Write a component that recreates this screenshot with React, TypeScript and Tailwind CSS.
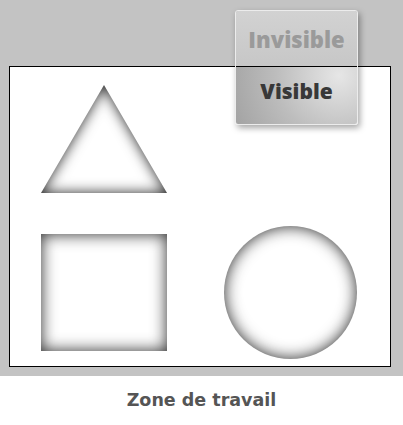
const panelFont = { fontFamily: "'Open Sans', Lato, sans-serif" };

function Triangle() {
  return (
    <svg width="126" height="108" viewBox="0 0 126 108">
      <defs>
        <filter
          id="inner-tri"
          x="-50%"
          y="-50%"
          width="200%"
          height="200%"
          colorInterpolationFilters="sRGB"
        >
          <feComponentTransfer in="SourceAlpha" result="inv">
            <feFuncA type="table" tableValues="1 0" />
          </feComponentTransfer>
          <feGaussianBlur in="inv" stdDeviation="7" result="blur" />
          <feFlood floodColor="#000" floodOpacity="0.85" />
          <feComposite in2="blur" operator="in" result="shadow" />
          <feComposite in="shadow" in2="SourceAlpha" operator="in" result="inner" />
          <feMerge>
            <feMergeNode in="SourceGraphic" />
            <feMergeNode in="inner" />
          </feMerge>
        </filter>
      </defs>
      <polygon points="63,0 126,108 0,108" fill="#fff" filter="url(#inner-tri)" />
    </svg>
  );
}

export default function App() {
  return (
    <div className="relative w-[403px] h-[425px] bg-white overflow-hidden">
      {/* work area */}
      <div className="h-[376px] bg-[#c3c3c3] pt-[66px] pl-[9px]">
        <div className="w-[382px] h-[301px] border border-black bg-white pl-[31px] pt-[18px]">
          <div className="grid grid-cols-[126px_133px] gap-x-[57px] gap-y-[33px] items-center">
            <Triangle />
            <div />
            <div className="w-[126px] h-[117px] bg-white shadow-[inset_0_0_16px_rgba(0,0,0,0.85)]" />
            <div className="w-[133px] h-[133px] rounded-full bg-white shadow-[inset_0_0_16px_rgba(0,0,0,0.85)]" />
          </div>
        </div>
      </div>

      <div className="h-[49px] flex items-center justify-center">
        <span
          className="text-[17.5px] font-bold text-[#555]"
          style={{ fontFamily: "'DejaVu Sans', Verdana, sans-serif" }}
        >
          Zone de travail
        </span>
      </div>

      {/* visibility toggle */}
      <div
        className="absolute left-[235px] top-[10px] w-[123px] flex flex-col rounded-[3px] border border-[#ececec] overflow-hidden shadow-[2px_3px_6px_rgba(0,0,0,0.35)]"
        style={panelFont}
      >
        <div className="h-[56px] flex items-center justify-center bg-gradient-to-b from-[#d2d2d2] to-[#c7c7c7] border-b border-black">
          <span className="text-[22px] font-extrabold text-[#9a9a9a] leading-none">Invisible</span>
        </div>
        <div className="h-[57px] pb-[9px] flex items-center justify-center bg-[radial-gradient(circle_at_85%_15%,#e6e6e6_0%,#bdbdbd_55%,#a3a3a3_100%)]">
          <span className="text-[21px] font-extrabold text-[#383838] leading-none">Visible</span>
        </div>
      </div>
    </div>
  );
}
